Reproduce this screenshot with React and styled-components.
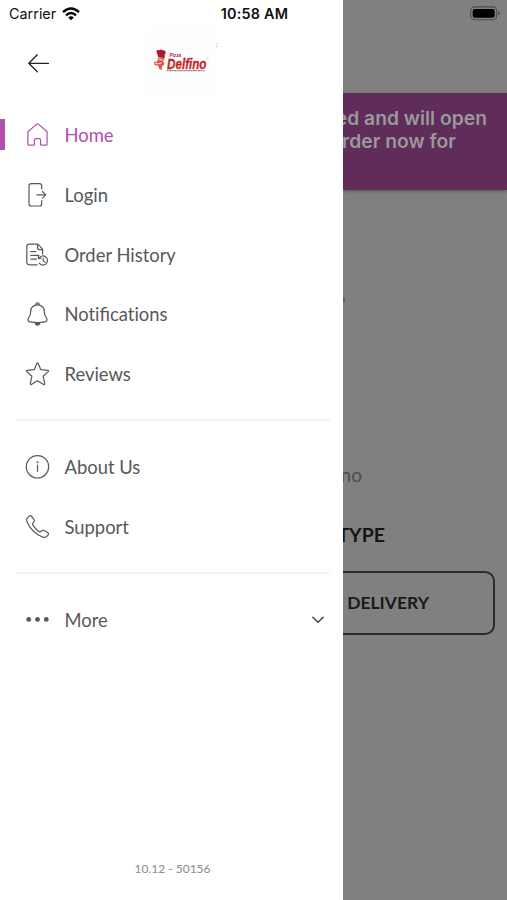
import React from "react";
import styled, { createGlobalStyle } from "styled-components";

const GlobalStyle = createGlobalStyle`
  * {
    box-sizing: border-box;
  }

  body {
    margin: 0;
    font-family: Lato, "Open Sans", sans-serif;
  }
`;

const Screen = styled.div`
  position: relative;
  display: flex;
  width: 507px;
  height: 900px;
  overflow: hidden;
  background-color: #808080;
`;

const StatusBar = styled.div`
  position: absolute;
  top: 0;
  left: 0;
  width: 100%;
  height: 27px;
  padding: 0 6px 0 9px;
  display: grid;
  grid-template-columns: 1fr auto 1fr;
  align-items: center;
  color: #111;
  font-family: Inter, "Liberation Sans", sans-serif;
  font-size: 14.4px;
`;

const Carrier = styled.div`
  display: flex;
  align-items: center;
  gap: 6px;
`;

const Time = styled.div`
  padding-right: 1px;
  font-weight: 600;
  letter-spacing: 0.2px;
`;

const Battery = styled.svg`
  justify-self: end;
`;

const Drawer = styled.div`
  display: flex;
  flex-direction: column;
  width: 343px;
  height: 100%;
  flex-shrink: 0;
  background-color: #fff;
`;

const DrawerHeader = styled.div`
  display: flex;
  height: 105px;
  padding-top: 27px;
  flex-shrink: 0;
`;

const BackButton = styled.div`
  width: 144px;
  padding: 26px 0 0 27px;
`;

const Nav = styled.div`
  display: flex;
  flex-direction: column;
`;

const NavItem = styled.div`
  display: flex;
  align-items: center;
  height: 59.85px;
  padding: 0 17px 0 ${(props) => (props.$active ? 20 : 25)}px;
  color: ${(props) => (props.$active ? "#b14fa9" : "#585858")};
  font-size: 18.4px;

  &:before {
    display: ${(props) => (props.$active ? "block" : "none")};
    content: "";
    width: 5px;
    height: 31px;
    margin-left: -20px;
    margin-right: 20px;
    background-color: #b14fa9;
  }

  svg {
    flex-shrink: 0;
  }
`;

const Label = styled.div`
  flex: 1;
  margin-left: 14.5px;
  white-space: nowrap;
`;

const Divider = styled.div`
  height: 2px;
  margin: 15px 13px 16px 16px;
  background-color: #f4f4f4;
`;

const Version = styled.div`
  margin-top: auto;
  padding: 0 0 23px 2px;
  text-align: center;
  color: #8c8c8c;
  font-size: 12px;
  line-height: 16px;
`;

const Page = styled.div`
  display: flex;
  flex-direction: column;
  align-items: stretch;
  width: 164px;
  height: 100%;
  padding-top: 93px;
  overflow: hidden;
  white-space: nowrap;
`;

const Banner = styled.div`
  display: flex;
  flex-direction: column;
  align-items: flex-end;
  height: 97px;
  padding-top: 14px;
  flex-shrink: 0;
  background-color: #602c59;
  box-shadow: 0 1px 3px rgba(0, 0, 0, 0.35);
  color: #999;
  font-family: Inter, "Liberation Sans", sans-serif;
  font-size: 19.3px;
  font-weight: 600;
  line-height: 23px;
`;

const BannerLine = styled.div`
  padding-right: ${(props) => props.$end}px;
`;

const Store = styled.div`
  display: flex;
  flex-direction: column;
  align-items: flex-end;
  height: 382px;
`;

const LogoEdge = styled.div`
  align-self: flex-start;
  width: 2px;
  height: 5px;
  margin-top: 107px;
  border-radius: 0 2px 2px 0;
  background-color: #67545a;
`;

const StoreName = styled.div`
  margin-top: 161px;
  padding-right: 145px;
  color: #4d4d4d;
  font-size: 19px;
  line-height: 24px;
`;

const Heading = styled.div`
  margin-top: 35px;
  padding-right: 122px;
  color: #151515;
  font-size: 19.5px;
  font-weight: 700;
  line-height: 26px;
`;

const DeliveryButton = styled.div`
  display: flex;
  align-items: center;
  justify-content: flex-end;
  height: 64px;
  margin: -1px 12px 0 -20px;
  padding: 0 64px 1px 0;
  flex-shrink: 0;
  border: 2px solid #2a2a2a;
  border-radius: 10px;
  color: #1a1a1a;
  font-size: 17.5px;
  font-weight: 700;
`;

const Icon = ({ children }) => (
  <svg
    width="25"
    height="26"
    viewBox="0 0 25 26"
    fill="none"
    stroke="currentColor"
    strokeWidth="1.2"
    strokeLinecap="round"
    strokeLinejoin="round"
  >
    {children}
  </svg>
);

const icons = {
  home: (
    <path d="M2.9 9.7 11.4 2.4Q12.5 1.5 13.6 2.4L22.1 9.7V22.2Q22.1 23.2 21.1 23.2H16.4Q15.6 23.2 15.6 22.4V18.2Q15.6 16.6 14 16.6H11Q9.4 16.6 9.4 18.2V22.4Q9.4 23.2 8.6 23.2H3.9Q2.9 23.2 2.9 22.2Z" />
  ),
  login: (
    <>
      <path d="M16.7 7V4Q16.7 1.7 14.4 1.7H6.3Q4 1.7 4 4V21.7Q4 24 6.3 24H14.4Q16.7 24 16.7 21.7V18.6" />
      <path d="M11.8 12.8H20.8M17.5 9.5 20.8 12.8 17.5 16.1" />
    </>
  ),
  history: (
    <>
      <path d="M12.2 22.8H4.4Q1.8 22.8 1.8 20.2V4.7Q1.8 2.1 4.4 2.1H12.8L17.6 7.1V12.1M12.5 2.1V5.4Q12.5 7.6 14.7 7.6H17.6M5.8 9.6H10.7M5.8 13.3H14M5.8 17.1H11.5" />
      <path d="M14 16.1A4.6 4.6 0 1 1 14.2 21.2M13.2 14.2 13.7 16.6 16.1 16.1M18.2 16V18.7L20.1 20.2" />
    </>
  ),
  bell: (
    <>
      <path d="M10.8 4.2V3.4Q10.8 1.9 12.5 1.9T14.2 3.4V4.2M12.5 3.8C8.2 3.8 5.7 6.7 5.7 10.4C5.7 14 4.8 15.2 3.6 16.8C2.4 18.6 3.2 20.6 5.2 20.9Q12.5 22.2 19.8 20.9C21.8 20.6 22.6 18.6 21.4 16.8C20.2 15.2 19.3 14 19.3 10.4C19.3 6.7 16.8 3.8 12.5 3.8Z" />
      <path d="M10.3 22.6H14.7Q14.1 24.2 12.5 24.2T10.3 22.6Z" fill="currentColor" />
    </>
  ),
  star: (
    <path d="M11.8 2.4Q12.5 1.4 13.2 2.4L15.8 8.7L22.8 9.4Q24 9.6 23.2 10.6L18.1 15.2L19.7 22.6Q19.8 24 18.6 23.5L12.5 19.8L6.4 23.5Q5.2 24 5.3 22.6L6.9 15.2L1.8 10.6Q1 9.6 2.2 9.4L9.2 8.7Z" />
  ),
  info: (
    <>
      <circle cx="12.5" cy="12.8" r="11.2" />
      <path d="M12.5 11V17.3" />
      <circle cx="12.5" cy="8.2" r=".4" fill="currentColor" />
    </>
  ),
  phone: (
    <path d="M2 4.3 4.2 2.1Q5.5 1 6.7 2.3L9.1 5.9Q9.8 7.1 8.8 8.1L7.7 9.2Q7.2 10 7.8 10.9Q10.2 14.8 14 17.7Q15 18.3 15.8 17.6L17.3 16.5Q18.3 15.8 19.3 16.4L22.6 18.5Q24.2 19.6 23 21L21.3 22.8Q19.8 24 17.5 23C10.3 20.1 4.7 14.4 2 7.8Q1.1 5.7 2 4.3Z" />
  ),
  more: (
    <g fill="currentColor" stroke="none">
      <circle cx="3.7" cy="12.4" r="2.4" />
      <circle cx="12.5" cy="12.4" r="2.4" />
      <circle cx="21.3" cy="12.4" r="2.4" />
    </g>
  ),
};

const Logo = () => (
  <svg width="78" height="70" viewBox="144 27 78 70">
    <defs>
      <linearGradient id="red" x1="0" y1="0" x2="0" y2="1">
        <stop offset="0" stopColor="#a5112f" />
        <stop offset="1" stopColor="#e02c1c" />
      </linearGradient>
    </defs>
    <rect x="145" y="27" width="71" height="68" fill="#fefefe" />
    <path
      d="M156.3 51.5Q157 49.6 159.3 50.2Q161 48.9 162.8 50.3Q165.6 50 165.7 52.6Q165.5 54 164.8 54.5L164.5 58.2L158.3 57Z"
      fill="#af1731"
    />
    <path
      d="M158.2 57.2 164.8 58.4 163 61.3 164.6 64 162 66.5 161.6 70 159.2 69.1 158.4 66.1 154.4 64.7 153.8 61.8 157.2 61.6Z"
      fill="#d85a4d"
    />
    <path
      d="M154.7 62.8Q157 64.8 161.5 63M158.7 59.2 162.5 60"
      fill="none"
      stroke="#fff"
      strokeWidth=".9"
    />
    <g fontFamily="Liberation Sans, sans-serif" fontWeight="700" fontStyle="italic">
      <text x="169.5" y="57" fontSize="5.2" textLength="11.5" lengthAdjust="spacingAndGlyphs" fill="#b2172f">
        Pizza
      </text>
      <text x="167" y="68.5" fontSize="14.6" textLength="39.5" lengthAdjust="spacingAndGlyphs" fill="url(#red)" stroke="url(#red)" strokeWidth=".3">
        Delfino
      </text>
    </g>
    <path d="M166.5 70.6H204.5" stroke="#888" strokeWidth="1.2" strokeDasharray="1.5 .5 2.5 .4" />
    <path d="M207.8 57.5V59.5M216.8 43V44.5M216.8 46V47.5" stroke="#d9aaa7" strokeWidth=".9" />
  </svg>
);

// \u200c keeps "ti" from joining into one glyph
const mainItems = [
  { icon: "home", label: "Home", active: true },
  { icon: "login", label: "Login" },
  { icon: "history", label: "Order History" },
  { icon: "bell", label: "Not\u200cificat\u200cions" },
  { icon: "star", label: "Reviews" },
];

const infoItems = [
  { icon: "info", label: "About Us" },
  { icon: "phone", label: "Support" },
];

const NavList = ({ items }) =>
  items.map((item) => (
    <NavItem key={item.icon} $active={item.active}>
      <Icon>{icons[item.icon]}</Icon>
      <Label>{item.label}</Label>
    </NavItem>
  ));

const App = () => {
  return (
    <Screen>
      <GlobalStyle />
      <Drawer>
        <DrawerHeader>
          <BackButton>
            <svg width="23" height="21" viewBox="0 0 23 21" fill="none" stroke="#222" strokeWidth="1.3" strokeLinecap="round" strokeLinejoin="round">
              <path d="M21.5 10.3H1.8M10.3 1.8 1.8 10.3 10.3 18.8" />
            </svg>
          </BackButton>
          <Logo />
        </DrawerHeader>
        <Nav>
          <NavList items={mainItems} />
          <Divider />
          <NavList items={infoItems} />
          <Divider />
          <NavItem>
            <Icon>{icons.more}</Icon>
            <Label>More</Label>
            <svg width="16" height="10" viewBox="0 0 16 10" fill="none" stroke="#444" strokeWidth="1.5" strokeLinecap="round" strokeLinejoin="round">
              <path d="M2.8 2.3 8 7.3 13.2 2.3" />
            </svg>
          </NavItem>
        </Nav>
        <Version>10.12 - 50156</Version>
      </Drawer>
      <Page>
        <Banner>
          <BannerLine $end={20}>ed and will open</BannerLine>
          <BannerLine $end={51}>rder now for</BannerLine>
        </Banner>
        <Store>
          <LogoEdge />
          <StoreName>no</StoreName>
          <Heading>TYPE</Heading>
        </Store>
        <DeliveryButton>DELIVERY</DeliveryButton>
      </Page>
      <StatusBar>
        <Carrier>
          Carrier
          <svg width="18" height="14" viewBox="0 0 18 14" fill="none" stroke="#000" strokeWidth="2.4">
            <path d="M1 5.1Q9-2.1 17 5.1M4 8.3Q9 3.9 14 8.3" />
            <path d="M9 13.2 6.2 10.5Q9 8.2 11.8 10.5Z" fill="#000" stroke="none" />
          </svg>
        </Carrier>
        <Time>10:58 AM</Time>
        <Battery width="31" height="15" viewBox="0 0 31 15">
          <rect x=".7" y=".9" width="26" height="12.8" rx="4" fill="#808080" stroke="#4c4c4c" strokeWidth="1.1" />
          <rect x="2.7" y="2.9" width="22" height="8.8" rx="2" fill="#000" />
          <path d="M28.2 5.2Q30.1 6 30.1 7.3T28.2 9.4Z" fill="#4c4c4c" />
        </Battery>
      </StatusBar>
    </Screen>
  );
};

export default App;
